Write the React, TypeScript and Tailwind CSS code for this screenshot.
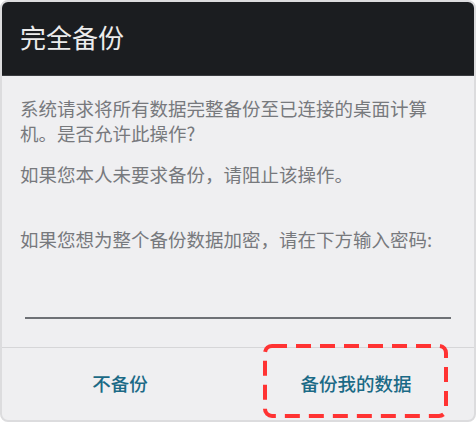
export default function App() {
  const font = { fontFamily: '"Noto Sans CJK SC", "Noto Sans", sans-serif' };
  return (
    <div className="w-[476px] h-[422px] bg-white" style={font}>
      <div className="relative w-full h-full flex flex-col rounded-[8px] border-2 border-[#dcdcde] bg-[#efeff1] overflow-hidden">
        {/* Title bar */}
        <div className="h-[74px] shrink-0 bg-[#1b1d20] border-b border-[#3a3c40] flex items-center pl-[18px]">
          <h1 className="text-[26px] leading-none text-[#ececec] pb-[4px]">完全备份</h1>
        </div>

        {/* Body */}
        <div className="flex-1 px-[18px] pt-[20px] text-[18.5px] leading-[25px] text-[#77797d]">
          <p>系统请求将所有数据完整备份至已连接的桌面计算机。是否允许此操作?</p>
          <p className="mt-[16px]">如果您本人未要求备份，请阻止该操作。</p>
          <p className="mt-[40px]">如果您想为整个备份数据加密，请在下方输入密码:</p>
          <div className="mt-[65px] mx-[5px] h-[2px] bg-[#6e7176]" />
        </div>

        {/* Buttons */}
        <div className="h-[73px] shrink-0 border-t border-[#d6d6d8] grid grid-cols-2 pb-[1px]">
          <button className="flex items-center justify-center text-[18.5px] font-medium text-[#1b6a86]">不备份</button>
          <button className="flex items-center justify-center text-[18.5px] font-medium text-[#1b6a86]">备份我的数据</button>
        </div>

        {/* Highlight annotation */}
        <svg className="absolute left-[261px] top-[342px]" width="185" height="74" viewBox="0 0 185 74">
          <rect x="2" y="2" width="181" height="70" rx="7" fill="none" stroke="#ff3333" strokeWidth="4" strokeDasharray="15 9" />
        </svg>
      </div>
    </div>
  );
}
